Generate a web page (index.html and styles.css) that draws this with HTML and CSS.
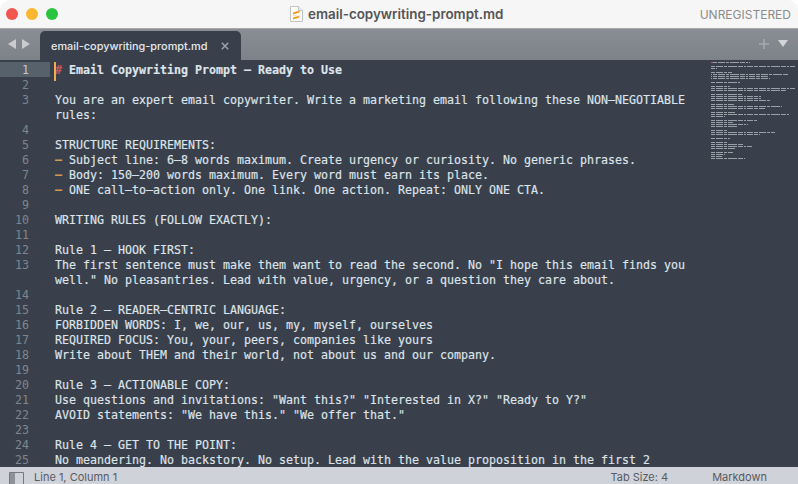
FILE: index.html
```html
<!DOCTYPE html>
<html lang="en">
<head>
    <meta charset="UTF-8">
    <meta name="viewport" content="width=device-width, initial-scale=1.0">
    <title>email-copywriting-prompt.md</title>
    <link rel="stylesheet" href="styles.css">
</head>
<body>
    <div class="window">
        <header class="titlebar">
            <div class="lights">
                <span class="light red"></span>
                <span class="light yellow"></span>
                <span class="light green"></span>
            </div>
            <div class="title">
                <svg class="file-icon" width="13" height="16" viewBox="0 0 13 16">
                    <path d="M.5.5h8l4 4v11H.5z" fill="#fbfbfb" stroke="#c4c4c4"/>
                    <path d="M8.5.5v4h4" fill="#eee" stroke="#c4c4c4"/>
                    <path d="M3 6.6l6.5-2v2L3 8.6zM3 9l6.5 2v-0.2L3 8.8zM3 11.4l6.5-2v2L3 13.4z" fill="#f59a23"/>
                </svg>
                <span>email-copywriting-prompt.md</span>
            </div>
            <div class="unregistered">UNREGISTERED</div>
        </header>

        <nav class="tabbar">
            <div class="arrows">
                <svg width="24" height="12" viewBox="0 0 24 12">
                    <path d="M9 1v10L1 6z" fill="#c9cbce"/>
                    <path d="M15 1v10L23 6z" fill="#c9cbce"/>
                </svg>
            </div>
            <div class="tab">
                <span>email-copywriting-prompt.md</span>
                <svg class="tab-close" width="8" height="8" viewBox="0 0 8 8">
                    <path d="M.8.8l6.4 6.4M7.2.8L.8 7.2" stroke="#9a9fa6" stroke-width="1.6"/>
                </svg>
            </div>
            <div class="tab-tools">
                <svg width="30" height="12" viewBox="0 0 30 12">
                    <path d="M6 1v10M1 6h10" stroke="#a5a8ad" stroke-width="1.6"/>
                    <path d="M20 2h10l-5 7z" fill="#d2d4d6"/>
                </svg>
            </div>
        </nav>

        <main class="editor">
            <div class="code">
                <span class="caret"></span>
                <div class="line active"><span class="num">1</span><span class="txt heading"><span class="mark">#</span> Email Copywriting Prompt – Ready to Use</span></div>
                <div class="line"><span class="num">2</span><span class="txt"></span></div>
                <div class="line"><span class="num">3</span><span class="txt">You are an expert email copywriter. Write a marketing email following these NON–NEGOTIABLE rules:</span></div>
                <div class="line"><span class="num">4</span><span class="txt"></span></div>
                <div class="line"><span class="num">5</span><span class="txt">STRUCTURE REQUIREMENTS:</span></div>
                <div class="line"><span class="num">6</span><span class="txt"><span class="dash">–</span> Subject line: 6–8 words maximum. Create urgency or curiosity. No generic phrases.</span></div>
                <div class="line"><span class="num">7</span><span class="txt"><span class="dash">–</span> Body: 150–200 words maximum. Every word must earn its place.</span></div>
                <div class="line"><span class="num">8</span><span class="txt"><span class="dash">–</span> ONE call–to–action only. One link. One action. Repeat: ONLY ONE CTA.</span></div>
                <div class="line"><span class="num">9</span><span class="txt"></span></div>
                <div class="line"><span class="num">10</span><span class="txt">WRITING RULES (FOLLOW EXACTLY):</span></div>
                <div class="line"><span class="num">11</span><span class="txt"></span></div>
                <div class="line"><span class="num">12</span><span class="txt">Rule 1 – HOOK FIRST:</span></div>
                <div class="line"><span class="num">13</span><span class="txt">The first sentence must make them want to read the second. No "I hope this email finds you well." No pleasantries. Lead with value, urgency, or a question they care about.</span></div>
                <div class="line"><span class="num">14</span><span class="txt"></span></div>
                <div class="line"><span class="num">15</span><span class="txt">Rule 2 – READER–CENTRIC LANGUAGE:</span></div>
                <div class="line"><span class="num">16</span><span class="txt">FORBIDDEN WORDS: I, we, our, us, my, myself, ourselves</span></div>
                <div class="line"><span class="num">17</span><span class="txt">REQUIRED FOCUS: You, your, peers, companies like yours</span></div>
                <div class="line"><span class="num">18</span><span class="txt">Write about THEM and their world, not about us and our company.</span></div>
                <div class="line"><span class="num">19</span><span class="txt"></span></div>
                <div class="line"><span class="num">20</span><span class="txt">Rule 3 – ACTIONABLE COPY:</span></div>
                <div class="line"><span class="num">21</span><span class="txt">Use questions and invitations: "Want this?" "Interested in X?" "Ready to Y?"</span></div>
                <div class="line"><span class="num">22</span><span class="txt">AVOID statements: "We have this." "We offer that."</span></div>
                <div class="line"><span class="num">23</span><span class="txt"></span></div>
                <div class="line"><span class="num">24</span><span class="txt">Rule 4 – GET TO THE POINT:</span></div>
                <div class="line"><span class="num">25</span><span class="txt">No meandering. No backstory. No setup. Lead with the value proposition in the first 2</span></div>
            </div>
            <div class="minimap">
                <svg width="93" height="110" viewBox="705 60 93 110">
                    <path class="mini-text" d="M713 62.500h37M711 66.500h84M711 68.500h6M711 72.500h21M713 74.500h75M713 76.500h56M713 78.500h57M711 82.500h29M711 86.500h19M711 88.500h84M711 90.500h75M711 94.500h31M711 96.500h50M711 98.500h50M711 100.500h59M711 104.500h23M711 106.500h71M711 108.500h54M711 112.500h24M711 114.500h79M711 116.500h14M711 120.500h46M711 122.500h22M711 124.500h37M711 126.500h27M711 130.500h16M711 132.500h64M711 134.500h49M711 138.500h19M711 142.500h17M711 144.500h32M711 146.500h41M711 148.500h24M711 152.500h22M711 154.500h14M711 156.500h11M711 158.500h34"/>
                    <path class="mini-mark" d="M711 62.500h2"/>
                    <path class="mini-dash" d="M711 74.500h1M711 76.500h1M711 78.500h1"/>
                </svg>
            </div>
        </main>

        <footer class="statusbar">
            <svg class="panel-icon" width="15" height="12" viewBox="0 0 15 12">
                <path d="M.5.500h14v12H.5z" fill="none" stroke="#77797e"/>
                <path d="M1 1h5v11H1z" fill="#8f9196"/>
            </svg>
            <span class="position">Line 1, Column 1</span>
            <span class="tab-size">Tab Size: 4</span>
            <span class="syntax">Markdown</span>
        </footer>
    </div>
</body>
</html>
```

FILE: styles.css
```css
* {
    box-sizing: border-box;
}
body {
    margin: 0;
    background: #fff;
    font-family: Inter, "Liberation Sans", sans-serif;
}
svg {
    display: block;
}
.window {
    width: 798px;
    height: 484px;
    display: flex;
    flex-direction: column;
    overflow: hidden;
    border-radius: 10px 10px 0 0;
}

/* title bar */
.titlebar {
    height: 29px;
    flex: none;
    display: flex;
    align-items: center;
    position: relative;
    background: #f6f6f6;
    border-bottom: 1px solid #a9a9a9;
}
.lights {
    display: flex;
    gap: 8px;
    padding-left: 6px;
}
.light {
    width: 12px;
    height: 12px;
    border-radius: 50%;
}
.red { background: #f1564f; }
.yellow { background: #fbb730; }
.green { background: #2ac440; }
.title {
    position: absolute;
    left: 290px;
    top: 6px;
    display: flex;
    align-items: center;
    gap: 5px;
    font-size: 13.4px;
    font-weight: 600;
    color: #555;
}
.unregistered {
    margin-left: auto;
    padding-right: 7px;
    font-size: 12px;
    color: #8b8b8b;
}

/* tabs */
.tabbar {
    height: 31px;
    flex: none;
    display: flex;
    background: linear-gradient(#8a8e94, #7d8188);
}
.arrows {
    width: 40px;
    padding: 9px 0 0 7px;
}
.tab {
    width: 201px;
    margin-top: 2px;
    display: flex;
    align-items: center;
    justify-content: space-between;
    padding: 0 11px;
    background: #39404b;
    border-radius: 5px 5px 0 0;
    font-size: 10.9px;
    font-weight: 500;
    color: #e4e7eb;
}
.tab-close {
    margin-right: 1px;
}
.tab-tools {
    margin-left: auto;
    padding: 9px 10px 0 0;
}

/* editor */
.editor {
    flex: 1;
    min-height: 0;
    display: flex;
    overflow: hidden;
    background: #39404b;
}
.code {
    width: 705px;
    flex: none;
    padding-top: 3px;
    position: relative;
    font-family: "DejaVu Sans Mono", monospace;
    font-size: 11.63px;
    line-height: 15px;
    color: #dfe4eb;
    -webkit-text-stroke: 0.15px;
}
.line {
    display: flex;
}
.num {
    width: 50px;
    flex: none;
    padding-right: 21px;
    text-align: right;
    color: #7f858e;
    -webkit-text-stroke: 0;
}
.txt {
    width: 636px;
    margin-left: 5px;
    min-height: 15px;
}
.active .num {
    height: 15px;
    margin-top: -1px;
    padding-top: 1px;
    background: #56616c;
    color: #c3c8cf;
}
.heading {
    font-weight: bold;
}
.mark {
    color: #c7565c;
}
.dash {
    color: #d19a50;
    font-weight: bold;
}
.caret {
    position: absolute;
    left: 54px;
    top: 2px;
    width: 2px;
    height: 19px;
    background: #f0ad4e;
}
.minimap {
    flex: 1;
}
.mini-text, .mini-mark, .mini-dash {
    fill: none;
    stroke-width: 1;
}
.mini-text {
    stroke: #9aa0a8;
    stroke-dasharray: 4 1 7 1 3 1 9 1 5 1 2 1 6 1;
}
.mini-mark {
    stroke: #c7565c;
}
.mini-dash {
    stroke: #d19a50;
}

/* status bar */
.statusbar {
    height: 17px;
    flex: none;
    display: flex;
    align-items: center;
    padding-top: 3px;
    background: #d0d2d9;
    font-size: 11px;
    color: #585b61;
    overflow: hidden;
}
.panel-icon {
    margin: 2px 0 0 9px;
    flex: none;
    align-self: flex-start;
}
.position {
    margin-left: 10px;
}
.tab-size {
    margin-left: auto;
}
.syntax {
    margin: 0 31px 0 44px;
}
```
